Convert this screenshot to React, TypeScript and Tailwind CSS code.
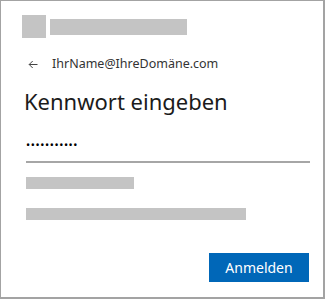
export default function App() {
  return (
    <div className="w-[325px] h-[299px] bg-white border-t border-l border-r-2 border-b-2 border-[#a3a3a3] font-['Segoe_UI','Noto_Sans',sans-serif] text-[#1b1b1b]">
      <div className="pl-[21px] pr-[14px] pt-[14px] flex flex-col">
        <div className="flex items-center gap-[4px]">
          <div className="w-[24px] h-[23px] bg-[#c4c4c4]" />
          <div className="w-[137px] h-[16px] bg-[#c4c4c4]" />
        </div>

        <div className="flex items-center mt-[16px] h-[20px]">
          <svg width="10" height="9" viewBox="0 0 10 9" className="ml-[6px] text-[#444]">
            <path d="M9.5 4.5H1.2M4.7 1L1.2 4.5 4.7 8" fill="none" stroke="currentColor" strokeWidth="1" />
          </svg>
          <span className="ml-[14px] text-[12.5px] text-[#333]">IhrName@IhreDomäne.com</span>
        </div>

        <h1 className="mt-[13px] ml-[2px] text-[22px] leading-[28px] font-normal">Kennwort eingeben</h1>

        <div className="mt-[20px] pl-[4px]">
          <div className="h-[20px] flex items-center text-[11px] tracking-[0.6px] text-black">•••••••••••</div>
          <div className="mt-[6px] h-[2px] bg-[#a6a6a6] w-[284px]" />
        </div>

        <div className="mt-[14px] ml-[4px] w-[108px] h-[12px] bg-[#c4c4c4]" />
        <div className="mt-[19px] ml-[4px] w-[220px] h-[12px] bg-[#c4c4c4]" />

        <div className="flex justify-end mt-[33px]">
          <button className="w-[100px] h-[29px] bg-[#0067b8] text-white text-[14px]">Anmelden</button>
        </div>
      </div>
    </div>
  );
}
